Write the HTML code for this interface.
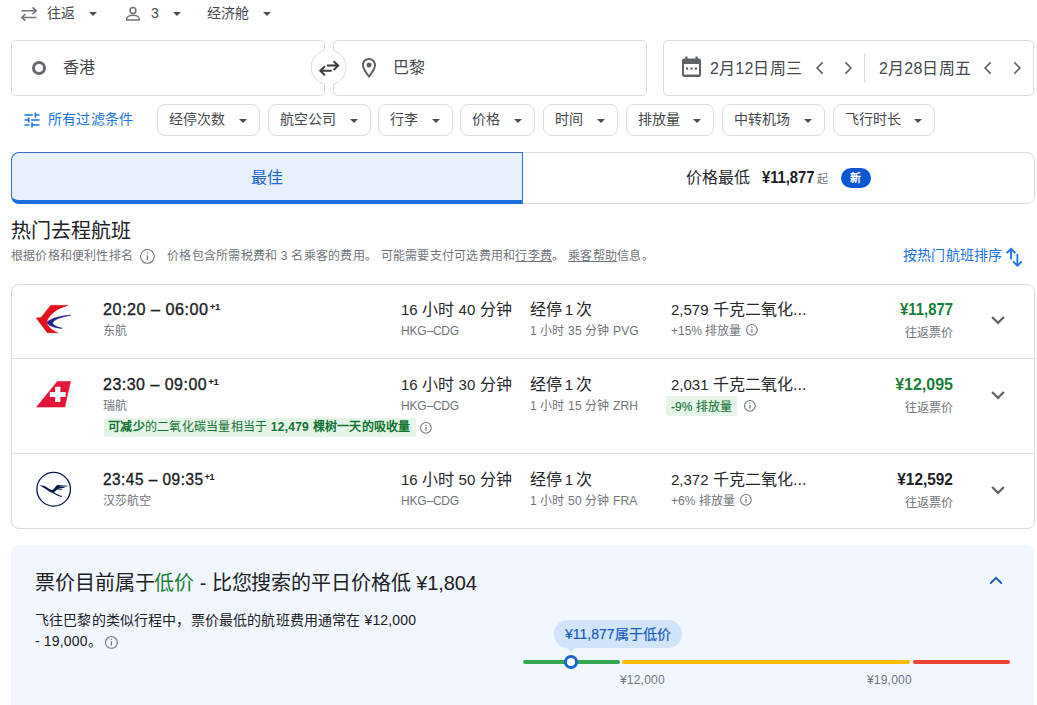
<!DOCTYPE html>
<html lang="zh-CN">
<head>
<meta charset="utf-8">
<title>航班</title>
<style>
*{box-sizing:border-box;margin:0;padding:0}
html,body{width:1037px;height:705px;overflow:hidden;background:#fff}
body{font-family:"Liberation Sans",sans-serif;color:#202124;position:relative;font-size:14px}
.abs{position:absolute;white-space:nowrap}
svg{position:absolute;display:block;overflow:visible}
.t{position:absolute;white-space:nowrap;line-height:1}
.grey{color:#70757a}
.dk{color:#45484c}
.chip{position:absolute;top:104px;height:32px;border:1px solid #dadce0;border-radius:8px;background:#fff}
.chip span{position:absolute;left:11px;top:6px;font-size:14px;line-height:16px;color:#45484c;white-space:nowrap}
.chip i{position:absolute;right:12px;top:14px;width:0;height:0;border-left:4px solid transparent;border-right:4px solid transparent;border-top:4px solid #4a4d51}
.caret{position:absolute;width:0;height:0;border-left:4px solid transparent;border-right:4px solid transparent;border-top:4px solid #4a4d51}
.big{font-size:16px;color:#26282b}
.big .n{font-size:15px}
.sm{font-size:12px;color:#70757a}
.b{font-weight:bold}
.green{color:#188038}
.tm{font-size:16px;color:#202124;-webkit-text-stroke:0.35px #202124;letter-spacing:0.5px;transform:scaleX(1.07);transform-origin:0 0}
.tm sup{font-size:9.5px;font-weight:bold;-webkit-text-stroke:0;letter-spacing:-0.3px;position:relative;top:0px;vertical-align:top;margin-left:1px}
.pr{font-size:16px;font-weight:bold;transform:scaleX(0.93);transform-origin:100% 0}
.prl{font-size:16px;font-weight:bold;transform:scaleX(0.92);transform-origin:0 0}
</style>
</head>
<body>
<!-- trip type / passengers / cabin -->
<svg style="left:20px;top:5px" width="18" height="18" viewBox="20 5 18 18"><g fill="none" stroke="#70757a" stroke-width="1.5"><path d="M21.5 10.800H36M32.600 7.400L36.100 10.800L32.600 14.200"/><path d="M36.500 17.400H22M25.400 14L21.900 17.400L25.400 20.800"/></g></svg>
<div class="t dk" style="left:47px;top:6px;font-size:14px">往返</div>
<div class="caret" style="left:89px;top:12px"></div>
<svg style="left:125px;top:5px" width="16" height="17" viewBox="125 5 16 17"><g fill="none" stroke="#70757a" stroke-width="1.5"><circle cx="133" cy="10.500" r="2.900"/><path d="M126.800 19.900V18.700C126.800 16.400 130.300 15.300 133 15.300S139.200 16.400 139.200 18.700V19.900Z"/></g></svg>
<div class="t dk" style="left:151px;top:6px;font-size:14px">3</div>
<div class="caret" style="left:173px;top:12px"></div>
<div class="t dk" style="left:207px;top:6px;font-size:14px">经济舱</div>
<div class="caret" style="left:263px;top:12px"></div>
<!-- search fields -->
<svg style="left:0;top:30px" width="1037" height="75" viewBox="0 30 1037 75"><g fill="#fff" stroke="#dadce0" stroke-width="1">
<path d="M15.500 40.500H320.500Q324.500 40.500 324.500 44.500V50.200A17.600 17.600 0 0 0 324.500 84.400V91.500Q324.500 95.500 320.500 95.500H15.500Q11.500 95.500 11.500 91.500V44.500Q11.500 40.500 15.500 40.500Z"/>
<path d="M337.500 40.500H642.500Q646.500 40.500 646.500 44.500V91.500Q646.500 95.500 642.500 95.500H337.500Q333.500 95.500 333.500 91.500V84.200A17.600 17.600 0 0 0 333.500 50.400V44.500Q333.500 40.500 337.500 40.500Z"/>
<rect x="663.500" y="40.500" width="370" height="55" rx="4"/>
</g></svg>
<div class="abs" style="left:32px;top:61px;width:14px;height:14px;border-radius:50%;border:3px solid #66696d"></div>
<div class="t" style="left:63px;top:60px;font-size:16px;color:#45484c">香港</div>
<svg style="left:317px;top:58px" width="24" height="20" viewBox="317 58 24 20"><g fill="none" stroke="#3c4043" stroke-width="2"><path d="M326.800 65.600H338M333.600 61.200L338.200 65.600L333.600 70"/><path d="M331.700 70.800H320.500M324.900 66.400L320.300 70.800L324.900 75.200"/></g></svg>
<svg style="left:357px;top:56px" width="24" height="24" viewBox="0 0 24 24" fill="#5f6368"><path d="M12 2C8.130 2 5 5.130 5 9c0 5.250 7 13 7 13s7-7.750 7-13c0-3.870-3.130-7-7-7zM7 9c0-2.760 2.240-5 5-5s5 2.240 5 5c0 2.880-2.880 7.190-5 9.880C9.920 16.210 7 11.850 7 9z"/><circle cx="12" cy="9" r="2.500"/></svg>
<div class="t" style="left:393px;top:60px;font-size:16px;color:#45484c">巴黎</div>
<svg style="left:680px;top:55px" width="23" height="24" viewBox="680 55 23 24"><g fill="#5f6368"><path d="M684.300 58.500h14.400a2.300 2.300 0 0 1 2.300 2.300v13.900a2.300 2.300 0 0 1-2.300 2.300h-14.400a2.300 2.300 0 0 1-2.300-2.300v-13.900a2.300 2.300 0 0 1 2.300-2.300zm-.3 5.500v10.600h15v-10.600z"/><rect x="685.300" y="56.500" width="2.200" height="4"/><rect x="695.500" y="56.500" width="2.200" height="4"/><rect x="686" y="67.500" width="2.200" height="2.200"/><rect x="690.400" y="67.500" width="2.200" height="2.200"/><rect x="694.800" y="67.500" width="2.200" height="2.200"/></g></svg>
<div class="t" style="left:710px;top:61px;font-size:16px;color:#45484c;letter-spacing:0.2px">2月12日周三</div>
<div class="t" style="left:879px;top:61px;font-size:16px;color:#45484c;letter-spacing:0.2px">2月28日周五</div>
<div class="abs" style="left:864px;top:53px;width:1px;height:30px;background:#dadce0"></div>
<svg style="left:811.5px;top:59px" width="16" height="18" viewBox="811.5 59 16 18"><path d="M822.1 62.4L816.6 68L822.1 73.6" fill="none" stroke="#5f6368" stroke-width="1.6"/></svg><svg style="left:839.5px;top:59px" width="16" height="18" viewBox="839.5 59 16 18"><path d="M844.9 62.4L850.4 68L844.9 73.6" fill="none" stroke="#5f6368" stroke-width="1.6"/></svg><svg style="left:980px;top:59px" width="16" height="18" viewBox="980 59 16 18"><path d="M990.6 62.4L985.1 68L990.6 73.6" fill="none" stroke="#5f6368" stroke-width="1.6"/></svg><svg style="left:1008.6px;top:59px" width="16" height="18" viewBox="1008.6 59 16 18"><path d="M1014.0 62.4L1019.5 68L1014.0 73.6" fill="none" stroke="#5f6368" stroke-width="1.6"/></svg>
<!-- filters -->
<svg style="left:21.500px;top:110.200px" width="20" height="20" viewBox="0 0 24 24" fill="#1a73e8"><path d="M3 17v2h6v-2H3zM3 5v2h10V5H3zm10 16v-2h8v-2h-8v-2h-2v6h2zM7 9v2H3v2h4v2h2V9H7zm14 4v-2H11v2h10zm-6-4h2V7h4V5h-4V3h-2v6z"/></svg>
<div class="t" style="left:48px;top:112px;font-size:14px;color:#1a73e8;letter-spacing:0.2px">所有过滤条件</div>
<div class="chip" style="left:157px;width:103px"><span>经停次数</span><i></i></div>
<div class="chip" style="left:268px;width:103px"><span>航空公司</span><i></i></div>
<div class="chip" style="left:378px;width:75px"><span>行李</span><i></i></div>
<div class="chip" style="left:460px;width:75px"><span>价格</span><i></i></div>
<div class="chip" style="left:543px;width:75px"><span>时间</span><i></i></div>
<div class="chip" style="left:626px;width:88px"><span>排放量</span><i></i></div>
<div class="chip" style="left:722px;width:103px"><span>中转机场</span><i></i></div>
<div class="chip" style="left:833px;width:102px"><span>飞行时长</span><i></i></div>
<!-- tabs -->
<div class="abs" style="left:11px;top:152px;width:1024px;height:52px;border:1px solid #dadce0;border-radius:8px;background:#fff"></div>
<div class="abs" style="left:11px;top:152px;width:512px;height:52px;border:1px solid #3a6fc0;border-bottom:4px solid #1a6ee0;border-radius:8px 0 0 8px;background:#e8f0fd"></div>
<div class="t" style="left:251px;top:170px;font-size:16px;color:#1967d2">最佳</div>
<div class="t" style="left:686px;top:170px;font-size:16px;color:#26282b">价格最低</div>
<div class="t prl" style="left:762px;top:170px;color:#202124">¥11,877</div>
<div class="t grey" style="left:817px;top:174px;font-size:11px">起</div>
<div class="abs" style="left:841px;top:168px;width:30px;height:20px;border-radius:10px;background:#0b57d0"></div>
<div class="t b" style="left:850px;top:173px;font-size:11px;color:#fff">新</div>
<!-- heading -->
<div class="t" style="left:11px;top:221px;font-size:20px;color:#202124">热门去程航班</div>
<div class="t grey" style="left:11px;top:250px;font-size:12px;letter-spacing:0.2px">根据价格和便利性排名</div>
<svg style="left:138.8px;top:248.0px" width="16.8" height="16.8" viewBox="138.8 248.0 16.8 16.8"><circle cx="147.2" cy="256.4" r="6.85" fill="none" stroke="#74797e" stroke-width="1.1"/><rect x="146.60" y="255.50" width="1.2" height="4.59" fill="#74797e"/><rect x="146.60" y="252.33" width="1.2" height="1.2" fill="#74797e"/></svg>
<div class="t grey" style="left:167px;top:250px;font-size:12px;letter-spacing:0.25px">价格包含所需税费和 3 名乘客的费用。 可能需要支付可选费用和<u>行李费</u>。 <u>乘客帮助</u>信息。</div>
<div class="t" style="left:903px;top:248px;font-size:14px;color:#1a73e8;letter-spacing:0.2px">按热门航班排序</div>
<svg style="left:1004px;top:246px" width="22" height="22" viewBox="1004 246 22 22"><g fill="none" stroke="#1a73e8" stroke-width="1.800"><path d="M1011 259.600V249M1006.600 253.200L1011 248.800L1015.400 253.200"/><path d="M1017.400 254V265.600M1013 261.400L1017.400 265.800L1021.800 261.400"/></g></svg>
<!-- flight list -->
<div class="abs" style="left:11px;top:284px;width:1024px;height:245px;border:1px solid #dadce0;border-radius:8px;background:#fff"></div>
<div class="abs" style="left:11px;top:358px;width:1024px;height:1px;background:#dadce0"></div>
<div class="abs" style="left:11px;top:453px;width:1024px;height:1px;background:#dadce0"></div>
<!-- airline logos -->
<svg style="left:34px;top:302px" width="40" height="34" viewBox="34 302 40 34">
<path d="M67.800 305.400H50.700L41 317.700L36.300 318L47.300 332.700H57.600C53 331 48.200 327.500 46.600 322.600C47.400 316.500 55 308.600 67.800 305.400Z" fill="#e60f1e" stroke="#e60f1e" stroke-width="0.700" stroke-linejoin="round"/>
<path d="M70.700 315.200C63 315.600 52 317.500 46.600 322.400C49.500 326.300 56 328 62.200 328.300C57.500 327 53 325.300 52.600 323C53 319.800 61 317 70.700 315.200Z" fill="#23238c" stroke="#23238c" stroke-width="0.600" stroke-linejoin="round"/>
</svg>
<svg style="left:34px;top:378px" width="40" height="32" viewBox="34 378 40 32">
<path d="M57.300 381.500H70.500L64.800 407H36.600Z" fill="#e3163a" stroke="#e3163a" stroke-width="0.600" stroke-linejoin="round"/>
<path d="M55.100 386.700h5.300v5.300h5.300v5h-5.300v5h-5.300v-5h-5.300v-5h5.300z" fill="#fff"/>
</svg>
<svg style="left:34px;top:470px" width="40" height="40" viewBox="34 470 40 40">
<circle cx="53.650" cy="489.250" r="16.800" fill="#fff" stroke="#0a1a4a" stroke-width="1.300"/>
<path d="M39.100 485.300L42.600 485.500C45 486 47 487.400 49 488.800C50.500 489.900 52 490.300 53.200 489.600C55 488.300 55.600 485.600 57.600 485.100L67.800 485.700L66.800 486.500L58.600 486.600L65 487.300L64.200 488.100L58 488L62.800 489L62 489.800L57.200 489.500C56.200 490.300 55 491.500 54 492.200C56.500 494 59.500 495.300 62.400 496.100L61.600 497C58 496.200 55 494.600 52.400 492.800C50 492.300 48 490.800 46 489.300C44 487.800 42 486.600 39.100 485.300Z" fill="#0a1a4a"/>
</svg>
<!-- row 1 -->
<div class="t tm" style="left:103px;top:302px;transform:scaleX(1.012)">20:20 – 06:00<sup>+1</sup></div>
<div class="t sm" style="left:103px;top:325px">东航</div>
<div class="t big" style="left:401px;top:302px"><span class="n">16</span> 小时 <span class="n">40</span> 分钟</div>
<div class="t sm" style="left:401px;top:325px;letter-spacing:-0.2px">HKG–CDG</div>
<div class="t big" style="left:530px;top:302px;word-spacing:-1.700px">经停 <span class="n">1</span> 次</div>
<div class="t sm" style="left:530px;top:325px;letter-spacing:0.15px">1 小时 35 分钟 PVG</div>
<div class="t big" style="left:671px;top:302px"><span class="n">2,579</span> 千克二氧化...</div>
<div class="t sm" style="left:671px;top:325px">+15% 排放量</div>
<div class="t pr" style="right:84px;top:302px;color:#188038;transform:scaleX(0.93)">¥11,877</div>
<div class="t sm" style="right:84px;top:326.5px">往返票价</div>
<svg style="left:745.1px;top:323.4px" width="13.8" height="13.8" viewBox="745.1 323.4 13.8 13.8"><circle cx="752" cy="330.3" r="5.35" fill="none" stroke="#74797e" stroke-width="1.1"/><rect x="751.40" y="329.40" width="1.2" height="3.66" fill="#74797e"/><rect x="751.40" y="327.06" width="1.2" height="1.2" fill="#74797e"/></svg><svg style="left:989px;top:313.2px" width="18" height="14" viewBox="989 313.2 18 14"><path d="M992.1 317.2L998 323.09999999999997L1003.9 317.2" fill="none" stroke="#5f6368" stroke-width="2.2"/></svg>
<!-- row 2 -->
<div class="t tm" style="left:103px;top:377px;transform:scaleX(0.998)">23:30 – 09:00<sup>+1</sup></div>
<div class="t sm" style="left:103px;top:400px">瑞航</div>
<div class="t big" style="left:401px;top:377px"><span class="n">16</span> 小时 <span class="n">30</span> 分钟</div>
<div class="t sm" style="left:401px;top:400px;letter-spacing:-0.2px">HKG–CDG</div>
<div class="t big" style="left:530px;top:377px;word-spacing:-1.700px">经停 <span class="n">1</span> 次</div>
<div class="t sm" style="left:530px;top:400px;letter-spacing:0.15px">1 小时 15 分钟 ZRH</div>
<div class="t big" style="left:671px;top:377px"><span class="n">2,031</span> 千克二氧化...</div>
<div class="abs" style="left:666px;top:396px;width:71px;height:20px;background:#e6f4ea;border-radius:2px"></div>
<div class="t sm" style="left:671px;top:401px;color:#137333;-webkit-text-stroke:0.1px #137333">-9% 排放量</div>
<div class="t pr" style="right:84px;top:377px;color:#188038;transform:scaleX(1.0)">¥12,095</div>
<div class="t sm" style="right:84px;top:401.5px">往返票价</div>
<svg style="left:742.6px;top:398.6px" width="13.8" height="13.8" viewBox="742.6 398.6 13.8 13.8"><circle cx="749.5" cy="405.5" r="5.35" fill="none" stroke="#74797e" stroke-width="1.1"/><rect x="748.90" y="404.60" width="1.2" height="3.66" fill="#74797e"/><rect x="748.90" y="402.25" width="1.2" height="1.2" fill="#74797e"/></svg><svg style="left:989px;top:388.2px" width="18" height="14" viewBox="989 388.2 18 14"><path d="M992.1 392.2L998 398.09999999999997L1003.9 392.2" fill="none" stroke="#5f6368" stroke-width="2.2"/></svg>
<div class="abs" style="left:104px;top:418px;width:312px;height:19px;background:#e6f4ea;border-radius:2px"></div>
<div class="t" style="left:108px;top:421px;font-size:12px;color:#137333;letter-spacing:0.25px"><b>可减少</b>的二氧化碳当量相当于 <b>12,479 棵树一天的吸收量</b></div>
<svg style="left:419.4px;top:420.7px" width="13.8" height="13.8" viewBox="419.4 420.7 13.8 13.8"><circle cx="426.3" cy="427.6" r="5.35" fill="none" stroke="#74797e" stroke-width="1.1"/><rect x="425.70" y="426.70" width="1.2" height="3.66" fill="#74797e"/><rect x="425.70" y="424.36" width="1.2" height="1.2" fill="#74797e"/></svg>
<!-- row 3 -->
<div class="t tm" style="left:103px;top:472px;transform:scaleX(0.963)">23:45 – 09:35<sup>+1</sup></div>
<div class="t sm" style="left:103px;top:495px">汉莎航空</div>
<div class="t big" style="left:401px;top:472px"><span class="n">16</span> 小时 <span class="n">50</span> 分钟</div>
<div class="t sm" style="left:401px;top:495px;letter-spacing:-0.2px">HKG–CDG</div>
<div class="t big" style="left:530px;top:472px;word-spacing:-1.700px">经停 <span class="n">1</span> 次</div>
<div class="t sm" style="left:530px;top:495px;letter-spacing:0.15px">1 小时 50 分钟 FRA</div>
<div class="t big" style="left:671px;top:472px"><span class="n">2,372</span> 千克二氧化...</div>
<div class="t sm" style="left:671px;top:495px">+6% 排放量</div>
<div class="t pr" style="right:84px;top:472px;color:#202124;transform:scaleX(0.96)">¥12,592</div>
<div class="t sm" style="right:84px;top:496.5px">往返票价</div>
<svg style="left:738.6px;top:493.4px" width="13.8" height="13.8" viewBox="738.6 493.4 13.8 13.8"><circle cx="745.5" cy="500.3" r="5.35" fill="none" stroke="#74797e" stroke-width="1.1"/><rect x="744.90" y="499.40" width="1.2" height="3.66" fill="#74797e"/><rect x="744.90" y="497.06" width="1.2" height="1.2" fill="#74797e"/></svg><svg style="left:989px;top:483.2px" width="18" height="14" viewBox="989 483.2 18 14"><path d="M992.1 487.2L998 493.09999999999997L1003.9 487.2" fill="none" stroke="#5f6368" stroke-width="2.2"/></svg>
<!-- price insights -->
<div class="abs" style="left:11px;top:545px;width:1023px;height:170px;border-radius:8px;background:#f2f6fe"></div>
<div class="t" style="left:35px;top:573px;font-size:20px;color:#202124;letter-spacing:-0.1px">票价目前属于<span class="green">低价</span> - 比您搜索的平日价格低 ¥1,804</div>
<svg style="left:987px;top:574px" width="18" height="14" viewBox="987 574 18 14"><path d="M990.2 583.6L996 577.9L1001.8 583.6" fill="none" stroke="#185abc" stroke-width="2"/></svg>
<div class="t" style="left:35px;top:613px;font-size:14px;color:#202124;letter-spacing:0.15px">飞往巴黎的类似行程中，票价最低的航班费用通常在 ¥12,000</div>
<div class="t" style="left:35px;top:634px;font-size:14px;color:#202124;letter-spacing:0.15px">- 19,000。</div>
<svg style="left:104.2px;top:634.6px" width="14.8" height="14.8" viewBox="104.2 634.6 14.8 14.8"><circle cx="111.6" cy="642" r="5.85" fill="none" stroke="#74797e" stroke-width="1.1"/><rect x="111.00" y="641.10" width="1.2" height="3.97" fill="#74797e"/><rect x="111.00" y="638.48" width="1.2" height="1.2" fill="#74797e"/></svg>
<div class="abs" style="left:523px;top:660px;width:97px;height:4px;border-radius:2px;background:#34a853"></div>
<div class="abs" style="left:622px;top:660px;width:288px;height:4px;border-radius:2px;background:#fbbc04"></div>
<div class="abs" style="left:913px;top:660px;width:97px;height:4px;border-radius:2px;background:#ea4335"></div>
<div class="abs" style="left:564px;top:655px;width:14px;height:14px;border-radius:50%;background:#fff;border:3px solid #1b66d3"></div>
<div class="abs" style="left:554px;top:620px;width:128px;height:28px;border-radius:14px;background:#d2e3fc"></div>
<div class="abs" style="left:566px;top:647px;width:0;height:0;border-left:5px solid transparent;border-right:5px solid transparent;border-top:5px solid #d2e3fc"></div>
<div class="t" style="left:565px;top:627px;font-size:14px;color:#185abc;-webkit-text-stroke:0.200px #185abc">¥11,877属于低价</div>
<div class="t sm" style="left:620px;top:674px;letter-spacing:0.2px">¥12,000</div>
<div class="t sm" style="left:867px;top:674px;letter-spacing:0.2px">¥19,000</div>
</body>
</html>
